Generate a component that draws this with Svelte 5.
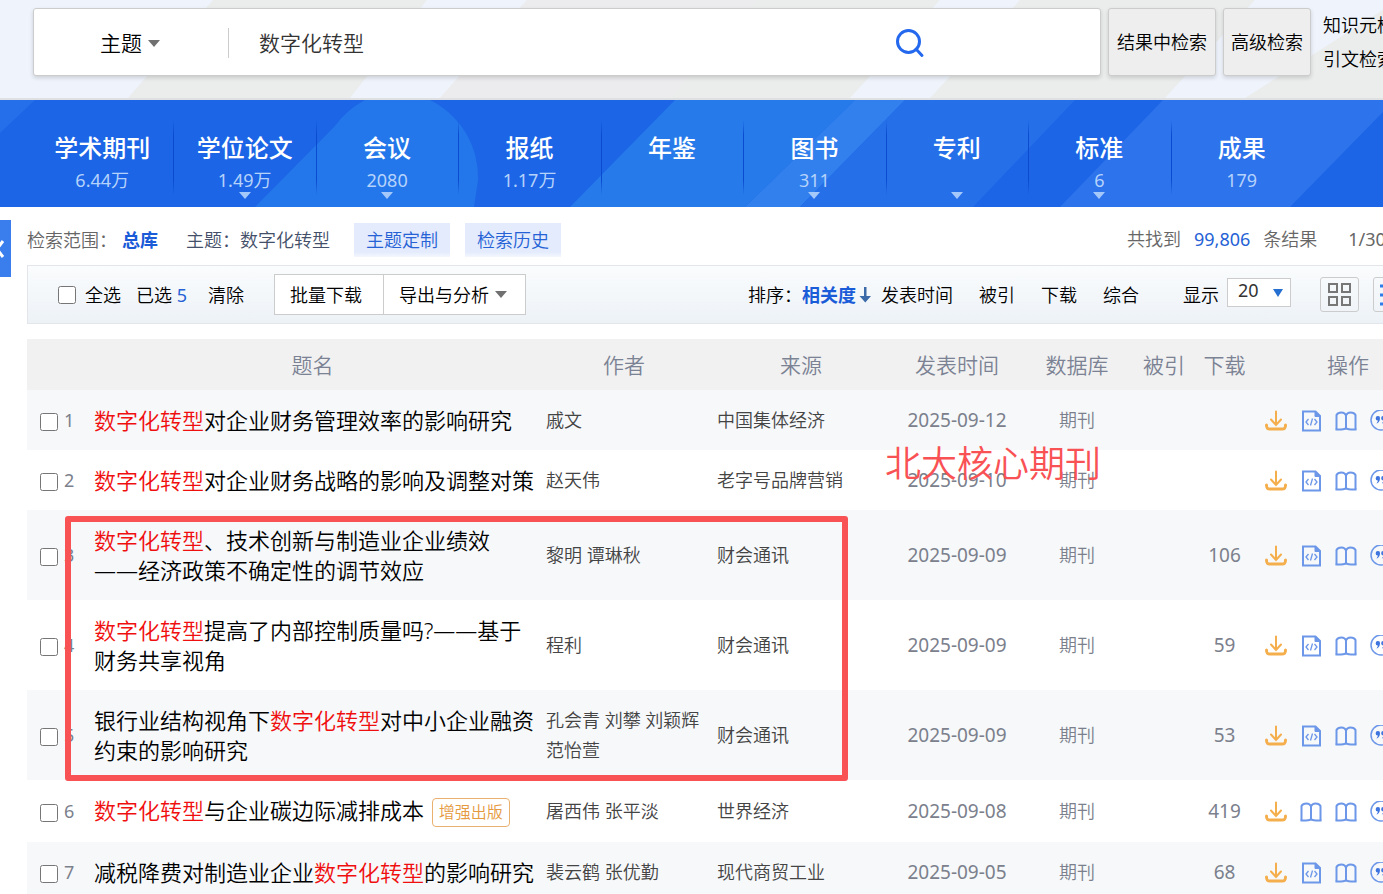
<script lang="ts">
	type Part = { text: string; hit?: boolean };
	type Row = {
		title: Part[];
		authors: string;
		source: string;
		date: string;
		downloads?: number;
		tag?: string;
		icon: string;
	};

	const term = '数字化转型';

	const tabs = [
		{ name: '学术期刊', count: '6.44万', more: false },
		{ name: '学位论文', count: '1.49万', more: true },
		{ name: '会议', count: '2080', more: true },
		{ name: '报纸', count: '1.17万', more: false },
		{ name: '年鉴', count: '', more: false },
		{ name: '图书', count: '311', more: true },
		{ name: '专利', count: '', more: true },
		{ name: '标准', count: '6', more: true },
		{ name: '成果', count: '179', more: false }
	];

	const columns = ['', '题名', '作者', '来源', '发表时间', '数据库', '被引', '下载', '操作'];

	const hit: Part = { text: term, hit: true };

	const rows: Row[] = [
		{ title: [hit, { text: '对企业财务管理效率的影响研究' }], authors: '戚文', source: '中国集体经济', date: '2025-09-12', icon: 'html' },
		{ title: [hit, { text: '对企业财务战略的影响及调整对策' }], authors: '赵天伟', source: '老字号品牌营销', date: '2025-09-10', icon: 'html' },
		{ title: [hit, { text: '、技术创新与制造业企业绩效\n——经济政策不确定性的调节效应' }], authors: '黎明 谭琳秋', source: '财会通讯', date: '2025-09-09', downloads: 106, icon: 'html' },
		{ title: [hit, { text: '提高了内部控制质量吗?——基于财务共享视角' }], authors: '程利', source: '财会通讯', date: '2025-09-09', downloads: 59, icon: 'html' },
		{ title: [{ text: '银行业结构视角下' }, hit, { text: '对中小企业融资约束的影响研究' }], authors: '孔会青 刘攀 刘颖辉 范怡萱', source: '财会通讯', date: '2025-09-09', downloads: 53, icon: 'html' },
		{ title: [hit, { text: '与企业碳边际减排成本' }], authors: '屠西伟 张平淡', source: '世界经济', date: '2025-09-08', downloads: 419, tag: '增强出版', icon: 'book' },
		{ title: [{ text: '减税降费对制造业企业' }, hit, { text: '的影响研究' }], authors: '裴云鹤 张优勤', source: '现代商贸工业', date: '2025-09-05', downloads: 68, icon: 'html' }
	];

	let query = $state(term);
	let pageSize = $state('20');
</script>

{#snippet book()}
	<svg viewBox="0 0 22 22" fill="none" stroke="#6d97e8" stroke-width="2">
		<path d="M11 5.500C10 3 8.500 2.500 6.500 2.500S2.500 3 1.500 5v14.500M11 5.500C12 3 13.500 2.500 15.500 2.500s4 .5 5 2.500v14.500M11 5.500v13" />
		<path d="M.5 19.500h5.500c2 0 3.500-.5 5-1 1.500.5 3 1 5 1h5.500" />
	</svg>
{/snippet}

<div class="page">
	<header class="search">
		<svg class="backdrop" viewBox="0 0 1383 100" preserveAspectRatio="none" aria-hidden="true">
			<g fill="#eff4fc">
				<path d="M0 0h213l-85 100H0z" />
				<path d="M427 0h100l-87 100h-90z" />
				<path d="M940 0h80l-90 100h-80z" />
				<path d="M1255 0h128v10l-138 90h-80z" />
			</g>
			<path d="M527 0h230l-87 100H440z" fill="#ececee" />
		</svg>
		<form class="search-box" onsubmit={(e) => e.preventDefault()}>
			<button type="button" class="field">主题<i class="caret"></i></button>
			<input type="text" aria-label="检索词" bind:value={query} />
			<button type="submit" class="go" aria-label="检索">
				<svg viewBox="0 0 30 30" fill="none" stroke="#2468ee" stroke-width="3">
					<circle cx="13.500" cy="13.500" r="11" />
					<path d="M21 21l6 6.500" stroke-linecap="round" />
				</svg>
			</button>
		</form>
		<button type="button" class="side-button">结果中检索</button>
		<button type="button" class="side-button">高级检索</button>
		<div class="search-links">
			<a href="#knowledge">知识元检索</a>
			<a href="#citation">引文检索</a>
		</div>
	</header>

	<nav class="tabs">
		<svg class="backdrop" viewBox="0 0 1383 107" preserveAspectRatio="none" aria-hidden="true">
			<path d="M0 0h35L0 33z" fill="#256fea" />
			<path d="M255 107L335 26A86 86 0 0 1 365 0H430A86 86 0 0 1 478 80L474 107z" fill="#2477ea" />
			<path d="M675 0h180L745 107H570z" fill="#267aea" />
			<path d="M855 0h50L800 107h-55z" fill="#3180ed" />
			<path d="M905 0h170L973 107H800z" fill="#256fe9" />
			<path d="M1163 0h220v12l-93 95h-230z" fill="#2d73eb" />
		</svg>
		{#each tabs as tab}
			<a href="#tab" class="tab">
				<span class="tab-name">{tab.name}</span>
				<span class="tab-count">{tab.count}</span>
				{#if tab.more}<i class="caret light"></i>{/if}
			</a>
		{/each}
	</nav>

	<button type="button" class="collapse" aria-label="展开侧栏">
		<svg viewBox="0 0 11 20" fill="none" stroke="#fff" stroke-width="3">
			<path d="M3 2l-6 8 6 8" />
		</svg>
	</button>

	<main>
		<div class="scope">
			<span>检索范围：</span>
			<b>总库</b>
			<span class="condition">主题：{term}</span>
			<button type="button" class="chip">主题定制</button>
			<button type="button" class="chip">检索历史</button>
			<div class="total">
				<span>共找到</span>
				<em>99,806</em>
				<span>条结果</span>
				<span class="pages">1/300</span>
			</div>
		</div>

		<div class="toolbar">
			<label class="all"><input type="checkbox" />全选</label>
			<span class="picked">已选 <em>5</em></span>
			<button type="button" class="plain">清除</button>
			<div class="batch">
				<button type="button">批量下载</button>
				<button type="button">导出与分析<i class="caret"></i></button>
			</div>
			<div class="sorting">
				<span>排序：</span>
				<button type="button" class="plain active">
					相关度<svg viewBox="0 0 12 18" fill="#3c6aa8"><path d="M5 1h2.500v9H12l-5.700 6.500L.5 10H5z" /></svg>
				</button>
				<button type="button" class="plain">发表时间</button>
				<button type="button" class="plain">被引</button>
				<button type="button" class="plain">下载</button>
				<button type="button" class="plain">综合</button>
				<label class="size" for="page-size">显示</label>
				<span class="select">
					<select id="page-size" bind:value={pageSize}>
						<option>10</option>
						<option>20</option>
						<option>50</option>
					</select>
				</span>
				<button type="button" class="view" aria-label="详情">
					<svg viewBox="0 0 26 26" fill="none" stroke="#777" stroke-width="2">
						<path d="M2 2h8v8H2zM15 2h8v8h-8zM2 15h8v8H2zM15 15h8v8h-8z" />
					</svg>
				</button>
				<button type="button" class="view" aria-label="列表">
					<svg viewBox="0 0 26 26" fill="none" stroke="#2f7bea" stroke-width="3">
						<path d="M0 4h4M8 4h18M0 13h4M8 13h18M0 22h4M8 22h18" />
					</svg>
				</button>
			</div>
		</div>

		<div class="results">
			<table>
				<colgroup>
					<col class="c-seq" />
					<col />
					<col class="c-author" />
					<col class="c-source" />
					<col class="c-date" />
					<col class="c-db" />
					<col class="c-cited" />
					<col class="c-down" />
					<col class="c-ops" />
				</colgroup>
				<thead>
					<tr>
						{#each columns as column}
							<th>{column}</th>
						{/each}
					</tr>
				</thead>
				<tbody>
					{#each rows as row, i}
						<tr>
							<td class="seq">
								<label><input type="checkbox" />{i + 1}</label>
							</td>
							<td class="title">
								<a href="#article">{#each row.title as part}<span class:hit={part.hit}>{part.text}</span>{/each}</a>
								{#if row.tag}<span class="tag">{row.tag}</span>{/if}
							</td>
							<td class="author">{row.authors}</td>
							<td class="source">{row.source}</td>
							<td class="number">{row.date}</td>
							<td>期刊</td>
							<td></td>
							<td class="number">{row.downloads ?? ''}</td>
							<td>
								<div class="ops">
									<a href="#download" aria-label="下载">
										<svg viewBox="0 0 22 22" fill="none" stroke="#f5ae4c" stroke-width="3" stroke-linecap="round">
											<path d="M11 1.500V15M6 9.500l5 5.500 5-5.500" stroke-width="2" />
											<path d="M1.500 15c0 3.500 1 4 3.500 4h12c2.500 0 3.500-.5 3.500-4" />
										</svg>
									</a>
									<a href="#read" aria-label="阅读">
										{#if row.icon === 'html'}
											<svg viewBox="0 0 22 22" fill="none" stroke="#6d97e8" stroke-width="2">
												<path d="M3 1.500H15.500l4.500 4.500v14.500h-17z" />
												<path d="M15 1.500V6.500h5z" fill="#6d97e8" stroke-width="1" />
												<path d="M8.500 9l-2.500 3 2.500 3M14.500 9l2.500 3-2.500 3M12.500 8.500l-2 7" stroke-width="1.300" />
											</svg>
										{:else}
											{@render book()}
										{/if}
									</a>
									<a href="#open" aria-label="打开">{@render book()}</a>
									<a href="#cite" aria-label="引用">
										<svg viewBox="0 0 22 22" fill="none" stroke="#6d97e8" stroke-width="1.500">
											<circle cx="11" cy="10" r="10" />
											<g fill="#3f75df" stroke="none">
												<path d="M8 6a2 2 0 0 1 2 2.200c0 3-1.500 4.800-3.700 5.300 1-1.200 1.500-2 1.500-3A2 2 0 0 1 8 6z" />
												<path d="M13.500 6a2 2 0 0 1 2 2.200c0 3-1.500 4.800-3.700 5.300 1-1.200 1.500-2 1.500-3a2 2 0 0 1 .2-4.500z" />
											</g>
										</svg>
									</a>
								</div>
							</td>
						</tr>
					{/each}
				</tbody>
			</table>
			<div class="mark-box"></div>
			<div class="mark-text">北大核心期刊</div>
		</div>
	</main>
</div>

<style>
	:global(body) {
		margin: 0;
		background: #fff;
	}
	.page {
		position: relative;
		height: 100vh;
		overflow: hidden;
		font-family: 'Noto Sans', 'Noto Sans CJK SC', sans-serif;
		font-size: 18px;
		font-weight: 350;
		line-height: 30px;
		color: #000;
	}
	.page * {
		box-sizing: border-box;
	}
	button,
	input,
	select {
		margin: 0;
		font: inherit;
		color: inherit;
	}
	button {
		padding: 0;
		border: 0;
		background: none;
		white-space: nowrap;
	}
	a {
		color: inherit;
		text-decoration: none;
	}
	em {
		font-style: normal;
		font-weight: 400;
		color: #2562d6;
	}
	svg {
		display: block;
	}
	.backdrop {
		position: absolute;
		inset: 0;
		width: 100%;
		height: 100%;
	}
	.caret {
		display: inline-block;
		border: 6px solid transparent;
		border-top: 7px solid #707070;
		border-bottom: 0;
	}

	/* search */
	.search {
		position: relative;
		display: flex;
		gap: 7px;
		height: 100px;
		padding: 8px 0 24px 33px;
		background: #ebeded;
		border-bottom: 2px solid #dfe0e2;
	}
	.search > :not(.backdrop) {
		position: relative;
		height: 68px;
	}
	.search-box {
		flex: 1;
		display: flex;
		align-items: center;
		padding-top: 2px;
		background: #fff;
		border: 1px solid #ccc;
		border-radius: 3px;
		box-shadow: 0 2px 4px rgba(0, 0, 0, 0.15);
		font-size: 21px;
	}
	.field {
		display: flex;
		align-items: center;
		gap: 6px;
		width: 195px;
		height: 30px;
		padding-left: 66px;
		border-right: 1px solid #ccc;
	}
	.search-box input {
		flex: 1;
		min-width: 0;
		padding: 0 30px;
		border: 0;
		outline: 0;
		background: none;
		color: #333;
	}
	.go {
		width: 30px;
		height: 30px;
		margin-right: 175px;
	}
	.side-button {
		padding: 0 7px;
		background: #eee;
		border: 1px solid #ccc;
		border-radius: 3px;
		box-shadow: 0 2px 4px rgba(0, 0, 0, 0.15);
	}
	.search-box + .side-button {
		padding: 0 8px;
	}
	.search-links {
		width: 65px;
		padding-left: 5px;
		line-height: 34px;
		white-space: nowrap;
	}
	.search-links a {
		display: block;
	}

	/* database tabs */
	.tabs {
		position: relative;
		display: flex;
		height: 107px;
		padding: 0 70px 0 31px;
		background: #1b65e6;
		color: #fff;
	}
	.tab {
		position: relative;
		flex: 1;
		display: flex;
		flex-direction: column;
		align-items: center;
		padding-top: 32px;
	}
	.tab + .tab::before {
		content: '';
		position: absolute;
		left: 0;
		top: 20px;
		width: 1px;
		height: 75px;
		background: linear-gradient(transparent, #0a4bd0 20%, #0a4bd0 80%, transparent);
	}
	.tab-name {
		font-size: 24px;
		font-weight: 500;
		line-height: 32px;
	}
	.tab-count {
		height: 28px;
		font-weight: 400;
		line-height: 32px;
		color: #b5d2fb;
	}
	.caret.light {
		border-top-color: #a5c8fb;
	}

	.collapse {
		position: absolute;
		left: 0;
		top: 220px;
		width: 11px;
		height: 57px;
		background: #3a7ded;
	}
	.collapse svg {
		width: 11px;
		height: 20px;
	}

	/* the list runs on past the right edge */
	main {
		width: calc(100% + 57px);
		padding-left: 27px;
		box-sizing: border-box;
	}
	.scope {
		display: flex;
		align-items: center;
		height: 58px;
		padding-top: 8px;
		color: #666;
		white-space: nowrap;
	}
	.scope b {
		margin: 0 28px 0 5px;
		font-weight: 700;
		color: #1a5bd8;
	}
	.condition {
		margin-right: 24px;
		color: #44506a;
	}
	.chip {
		width: 96px;
		height: 34px;
		margin-right: 15px;
		background: linear-gradient(#e3ebfc 85%, #f4f7fe);
		color: #2562d6;
	}
	.total {
		display: flex;
		gap: 13px;
		flex: 0 0 313px;
		margin-left: auto;
		padding-bottom: 2px;
	}
	.pages {
		margin-left: 18px;
		font-weight: 400;
	}
	.toolbar {
		display: flex;
		align-items: center;
		height: 59px;
		padding-left: 30px;
		border: 1px solid #e2e6ea;
		background: linear-gradient(#fafcfd, #edf2f7);
		white-space: nowrap;
	}
	input[type='checkbox'] {
		width: 18px;
		height: 18px;
	}
	.all {
		display: flex;
		align-items: center;
		gap: 9px;
		margin-right: 15px;
	}
	.picked {
		margin-right: 21px;
	}
	.batch {
		display: flex;
		margin-left: 30px;
	}
	.batch button {
		display: flex;
		align-items: center;
		gap: 6px;
		height: 41px;
		padding: 0 21px 0 15px;
		border: 1px solid #ccc;
		background: #fff;
	}
	.batch button + button {
		padding-right: 18px;
		border-left: 0;
	}
	.sorting {
		display: flex;
		align-items: center;
		flex: 0 0 691px;
		margin-left: auto;
	}
	.sorting .plain {
		margin-right: 26px;
	}
	.sorting .active {
		display: flex;
		align-items: center;
		gap: 3px;
		margin-right: 10px;
		font-weight: 700;
		color: #1a5bd8;
	}
	.active svg {
		width: 12px;
		height: 18px;
	}
	.size {
		margin: 0 8px 0 18px;
	}
	.select {
		position: relative;
		margin-right: 29px;
	}
	.select::after {
		content: '';
		position: absolute;
		right: 8px;
		top: 11px;
		border: 5px solid transparent;
		border-top: 8px solid #246fd0;
		border-bottom: 0;
		pointer-events: none;
	}
	select {
		display: block;
		width: 64px;
		height: 29px;
		margin-bottom: 4px;
		padding: 0 10px 5px;
		appearance: none;
		border: 1px solid #ccc;
		border-radius: 0;
		background: #fff;
		color: #333;
		font-weight: 400;
		line-height: 22px;
	}
	.view {
		display: grid;
		place-items: center;
		width: 39px;
		height: 35px;
		margin-right: 14px;
		border: 1px solid #ccc;
		border-radius: 3px;
	}
	.view svg {
		width: 26px;
		height: 26px;
	}

	/* results */
	.results {
		position: relative;
		margin-top: 15px;
	}
	table {
		width: 100%;
		table-layout: fixed;
		border-collapse: collapse;
	}
	.c-seq { width: 57px; }
	.c-author { width: 166px; }
	.c-source { width: 188px; }
	.c-date { width: 124px; }
	.c-db { width: 116px; }
	.c-cited { width: 58px; }
	.c-down { width: 63px; }
	.c-ops { width: 184px; }
	th {
		height: 51px;
		padding: 0;
		background: #f1f1f1;
		font-size: 21px;
		font-weight: 350;
		color: #7b8294;
	}
	td {
		height: 60px;
		padding: 15px 0;
		text-align: center;
		color: #7b808c;
	}
	tbody tr:nth-child(odd) {
		background: #f6f8fa;
	}
	.seq label {
		display: flex;
		align-items: center;
		gap: 6px;
		padding-left: 13px;
		font-weight: 400;
	}
	.seq input {
		margin-top: 3px;
	}
	.title {
		padding-left: 10px;
		text-align: left;
		font-size: 22px;
		color: #000;
	}
	.title a {
		white-space: pre-line;
	}
	.hit {
		color: #f00f0f;
	}
	.tag {
		display: inline-block;
		height: 29px;
		margin-left: 2px;
		padding: 0 6px;
		border: 1px solid #e9b070;
		border-radius: 4px;
		font-size: 16px;
		line-height: 27px;
		vertical-align: 1px;
		color: #e59a3f;
	}
	.author {
		padding-left: 5px;
		text-align: left;
		color: #444;
	}
	.source {
		padding-left: 10px;
		text-align: left;
		color: #444;
	}
	.number {
		font-size: 19px;
		font-weight: 400;
	}
	.ops {
		display: flex;
		gap: 13px;
		padding: 2px 0 0 9px;
	}
	.ops svg {
		width: 22px;
		height: 22px;
	}

	/* hand-drawn notes over the list */
	.mark-box {
		position: absolute;
		left: 38px;
		top: 177px;
		width: 783px;
		height: 265px;
		border: 6px solid #f95255;
		border-radius: 3px;
		pointer-events: none;
	}
	.mark-text {
		position: absolute;
		left: 858px;
		top: 101px;
		font-size: 36px;
		line-height: 48px;
		color: #f95255;
		pointer-events: none;
	}
</style>
